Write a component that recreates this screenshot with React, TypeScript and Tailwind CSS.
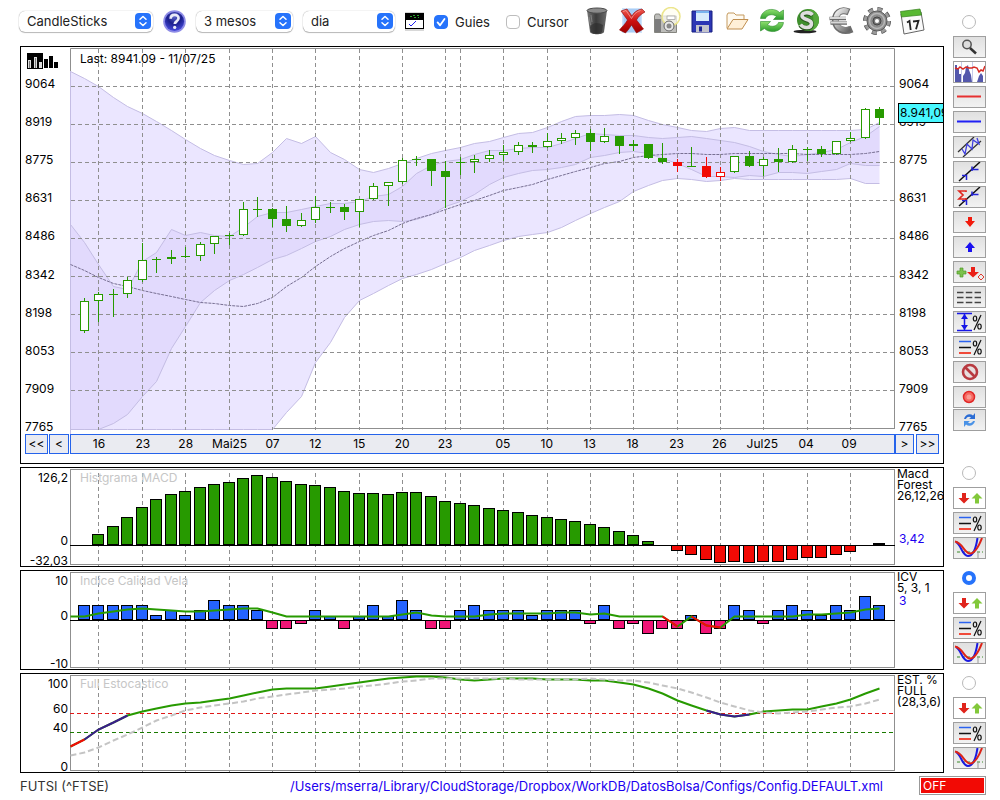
import React from 'react';

const GREEN = '#279a00';
const RED = '#f20a05';
const BLUE = '#2563ff';
const PINK = '#f01577';
const GRID = '#8f8f8f';

const px = (n: number) => (n < 0 ? 70 : Math.round(84 + 14.455 * n));

// kind: w = hollow, f = filled, l = single line; [kind, bodyTop, bodyBottom, high, low, red?]
type Candle = [string, number, number, number, number, boolean?];
const candles: Candle[] = [
  ['w', 301, 330, 298, 332], ['w', 294, 300, 292, 321], ['l', 294, 294, 289, 316], ['w', 280, 293, 277, 297],
  ['w', 260, 279, 243, 281], ['l', 259, 259, 257, 272], ['f', 257, 258, 250, 263], ['l', 256, 256, 247, 257],
  ['w', 244, 255, 242, 260], ['w', 236, 243, 236, 253], ['l', 235, 235, 233, 244], ['w', 209, 234, 202, 235],
  ['l', 209, 209, 197, 216], ['f', 209, 218, 208, 226], ['f', 219, 225, 206, 231], ['w', 220, 225, 213, 226],
  ['w', 207, 219, 196, 222], ['l', 207, 207, 202, 212], ['f', 207, 211, 204, 219], ['w', 199, 211, 199, 226],
  ['w', 186, 198, 183, 199], ['w', 182, 185, 182, 205], ['w', 160, 181, 158, 183], ['l', 159, 159, 156, 165],
  ['f', 159, 170, 159, 185], ['f', 171, 176, 161, 207], ['l', 162, 162, 157, 174], ['w', 159, 161, 155, 172],
  ['w', 155, 158, 150, 161], ['w', 152, 154, 145, 160], ['w', 145, 151, 142, 154], ['f', 145, 146, 142, 152],
  ['w', 141, 146, 133, 147], ['w', 138, 140, 133, 143], ['w', 133, 137, 130, 144], ['f', 133, 141, 129, 150],
  ['w', 136, 141, 128, 142], ['f', 136, 145, 136, 153], ['f', 144, 145, 140, 150], ['f', 144, 157, 144, 158],
  ['f', 158, 161, 143, 163], ['f', 162, 165, 159, 171, true], ['l', 166, 166, 147, 166], ['f', 166, 176, 157, 177, true],
  ['w', 172, 176, 167, 180, true], ['w', 156, 171, 156, 172], ['f', 156, 165, 151, 166], ['w', 159, 165, 157, 175],
  ['f', 159, 161, 148, 171], ['w', 149, 161, 145, 162], ['l', 149, 149, 147, 160], ['f', 149, 153, 146, 156],
  ['w', 141, 153, 141, 154], ['w', 138, 140, 132, 141], ['w', 109, 137, 108, 138], ['f', 109, 117, 107, 124],
];

// Each series starts one slot before the first candle.
const outerTop = [71, 78, 86, 97, 106, 113, 121, 130, 139, 148, 155, 160, 164, 163, 152, 138, 143, 136, 152, 159, 169, 172, 168, 163, 158, 153, 150, 147, 143, 141, 137, 133, 132, 127, 121, 116, 115, 115, 114, 115, 120, 124, 127, 130, 131, 128, 127, 130, 130, 130, 130, 130, 130, 130, 130, 129, 122];
const outerBottom = [429, 429, 429, 429, 429, 429, 429, 429, 429, 429, 429, 429, 429, 429, 429, 412, 396, 362, 342, 317, 300, 293, 285, 278, 274, 269, 263, 257, 250, 245, 240, 236, 234, 232, 227, 220, 213, 207, 201, 191, 185, 180, 178, 179, 181, 180, 178, 179, 179, 179, 179, 179, 179, 179, 178, 183, 183];
const innerTop = [224, 242, 264, 286, 289, 261, 252, 229, 235, 232, 235, 236, 227, 216, 212, 212, 209, 206, 203, 203, 201, 196, 194, 186, 173, 165, 161, 159, 154, 150, 150, 148, 147, 147, 143, 138, 133, 134, 135, 135, 137, 138, 137, 136, 138, 140, 142, 146, 151, 154, 156, 154, 152, 149, 142, 136, 126];
const innerBottom = [429, 429, 429, 423, 414, 396, 381, 348, 326, 302, 290, 280, 274, 267, 259, 255, 248, 241, 236, 229, 224, 221, 220, 221, 219, 214, 206, 201, 194, 184, 177, 173, 170, 169, 167, 164, 157, 155, 152, 151, 153, 158, 163, 169, 176, 176, 177, 175, 176, 172, 172, 173, 171, 169, 163, 165, 165];
const middle = [264, 270, 277, 283, 286, 290, 293, 296, 299, 302, 303, 305, 306, 303, 297, 286, 277, 266, 256, 248, 241, 235, 230, 223, 218, 214, 209, 204, 200, 195, 190, 187, 184, 179, 175, 171, 167, 163, 161, 157, 155, 154, 153, 153, 154, 154, 153, 153, 153, 153, 153, 154, 154, 154, 154, 153, 151];

const macd = [0, 11, 19, 28, 38, 46, 51, 54, 58, 61, 63, 67, 70, 68, 64, 61, 60, 58, 54, 52, 52, 51, 53, 53, 49, 44, 42, 40, 37, 35, 33, 30, 28, 26, 24, 21, 18, 14, 10, 4, 0, -5, -9, -14, -17, -16, -17, -16, -16, -14, -12, -12, -9, -6, 0, 2];
const icv = [15, 15, 15, 15, 15, 5, 10, 5, 10, 20, 15, 15, 10, -8, -8, -3, 10, 4, -8, 4, 15, 4, 20, 10, -8, -8, 10, 15, 10, 10, 10, 5, 10, 10, 10, -3, 15, -8, -3, -13, -8, -8, 5, -13, -8, 15, 10, -3, 10, 15, 10, 5, 15, 10, 24, 15];
const icvLine = [616, 616, 613, 611, 609, 608, 609, 610, 611, 611, 610, 609, 608, 608, 612, 616, 616, 616, 616, 616, 616, 616, 616, 614, 612, 615, 616, 616, 616, 614, 613, 613, 613, 613, 612, 612, 614, 613, 616, 616, 616, 616, 626, 616, 625, 627, 616, 616, 616, 616, 616, 614, 614, 613, 612, 609, 608];
const stoch = [746, 739, 729, 722, 715, 711, 708, 705, 703, 702, 700, 698, 695, 692, 689, 688, 688, 688, 686, 684, 682, 680, 678, 677, 676, 676, 677, 679, 680, 679, 678, 678, 678, 679, 679, 679, 680, 680, 682, 684, 688, 693, 700, 705, 710, 714, 716, 714, 711, 710, 709, 709, 706, 703, 699, 693, 688];
const signal = [755, 752, 747, 740, 734, 727, 720, 715, 710, 707, 705, 703, 701, 698, 696, 694, 692, 690, 689, 688, 686, 685, 683, 681, 680, 678, 678, 678, 678, 678, 678, 679, 679, 679, 679, 679, 678, 679, 680, 680, 682, 685, 688, 692, 697, 702, 706, 710, 712, 713, 712, 711, 709, 707, 706, 703, 699];

const ticks: [number, string][] = [
  [1, '16'], [4, '23'], [7, '28'], [10, 'Mai25'], [13, '07'], [16, '12'], [19, '15'], [22, '20'], [25, '23'], [26, ''],
  [29, '05'], [32, '10'], [35, '13'], [38, '18'], [41, '23'], [44, '26'], [47, 'Jul25'], [50, '04'], [53, '09'],
];
const prices = ['9064', '8919', '8775', '8631', '8486', '8342', '8198', '8053', '7909', '7765'];

// Polyline points for the slice [from, to] of a series, in series indexes.
const pts = (s: number[], from = 0, to = s.length - 1) =>
  s.slice(from, to + 1).map((y, i) => `${px(from + i - 1) + 0.5},${y + 0.5}`).join(' ');
const area = (a: number[], b: number[]) => `${pts(a)} ${pts(b).split(' ').reverse().join(' ')}`;

function GridColumns({ top, bottom }: { top: number; bottom: number }) {
  return (
    <g stroke={GRID} strokeDasharray="4 3">
      {ticks.map(([n]) => (
        <line key={n} x1={px(n) + 0.5} x2={px(n) + 0.5} y1={top} y2={bottom} />
      ))}
    </g>
  );
}

function Bars({ values, zero, up, down }: { values: number[]; zero: number; up: string; down: string }) {
  return (
    <g stroke="#000" shapeRendering="crispEdges">
      {values.map((v, n) =>
        v === 0 ? null : (
          <rect key={n} x={px(n) - 5.5} y={v > 0 ? zero - v + 0.5 : zero + 0.5} width={11} height={v > 0 ? v - 1 : -v} fill={v > 0 ? up : down} />
        ),
      )}
      <line x1={70} x2={895} y1={zero + 0.5} y2={zero + 0.5} />
    </g>
  );
}

function Plot({ box, className, children, label }: { box: string; className: string; label: string; children: React.ReactNode }) {
  return (
    <svg role="img" aria-label={label} viewBox={box} preserveAspectRatio="none" className={`block w-full ${className}`} fill="none">
      {children}
    </svg>
  );
}

function PriceChart() {
  return (
    <Plot box="70 47 825 387" className="h-[387px]" label="FUTSI">
      <path d="M70.5 429V48.5H894.5V429" stroke={GRID} />
      <path d="M272 428.5H894" stroke={GRID} />
      <polygon points={area(outerTop, outerBottom)} fill="#ebe6ff" />
      <polygon points={area(innerTop, innerBottom)} fill="#e2dafd" />
      <g stroke="#c4bde4">
        <polyline points={pts(outerTop)} />
        <polyline points={pts(outerBottom)} />
        <polyline points={pts(innerTop)} />
        <polyline points={pts(innerBottom)} />
        <path d="M70.5 71V434" />
      </g>
      <polyline points={pts(middle)} stroke="#776f92" strokeDasharray="3 1" />
      <GridColumns top={49} bottom={430} />
      <g stroke={GRID} strokeDasharray="4 3">
        {prices.slice(0, 9).map((p, i) => (
          <line key={p} x1={71} x2={895} y1={86.5 + i * 38} y2={86.5 + i * 38} />
        ))}
      </g>
      <g shapeRendering="crispEdges">
        {candles.map(([kind, top, bottom, high, low, red], n) => {
          const c = red ? RED : GREEN;
          const x = px(n);
          return (
            <g key={n}>
              <rect x={x} y={high} width={1} height={low - high + 1} fill={c} />
              {kind === 'w' ? (
                <rect x={x - 3.5} y={top + 0.5} width={8} height={bottom - top} fill="#fff" stroke={c} />
              ) : (
                <rect x={x - 4} y={top} width={9} height={bottom - top + 1} fill={c} />
              )}
            </g>
          );
        })}
      </g>
    </Plot>
  );
}

function Panel({ title, left, right, children }: { title: string; left: React.ReactNode; right: React.ReactNode; children: React.ReactNode }) {
  return (
    <section className="flex overflow-hidden border border-black text-[12px] leading-[12px]">
      <div className="flex h-[98px] w-[49px] shrink-0 flex-col items-end pr-[2px] pt-1">{left}</div>
      <div className="relative min-w-0 flex-1">
        <h2 className="absolute top-1 left-[10px] text-[#c6c6c6]">{title}</h2>
        {children}
      </div>
      <div className="w-[48px] shrink-0 whitespace-nowrap pl-[2px] leading-[11px]">{right}</div>
    </section>
  );
}

function Select({ label, value, className }: { label: string; value: string; className: string }) {
  return (
    <div className={`relative ${className}`}>
      <select aria-label={label} defaultValue={value} className="h-[21px] w-full appearance-none rounded-[6px] bg-white pl-2 text-[13px] leading-[20px] text-[#222] shadow-[0_0_1px_rgba(0,0,0,0.45),0_1px_1px_rgba(0,0,0,0.25)]">
        <option>{value}</option>
      </select>
      <svg viewBox="0 0 16 16" className="pointer-events-none absolute top-[2px] right-[2px] size-4" fill="none">
        <rect width="16" height="16" rx="4" fill="#2673fb" />
        <path d="M5 6.3L8 3.5l3 2.8M5 9.7l3 2.8 3-2.8" stroke="#fff" strokeWidth="1.5" strokeLinecap="round" strokeLinejoin="round" />
      </svg>
    </div>
  );
}

function Check({ id, label, checked }: { id: string; label: string; checked?: boolean }) {
  return (
    <div className="flex items-center gap-[7px] pt-[2px]">
      <span className="relative flex">
        <input id={id} type="checkbox" defaultChecked={checked} className="size-[14px] appearance-none rounded-[4px] border border-[#bdbdbd] bg-white checked:border-[#2673fb] checked:bg-[#2673fb]" />
        {checked && (
          <svg viewBox="0 0 14 14" className="pointer-events-none absolute inset-0 size-[14px]" fill="none">
            <path d="M3.6 7.4l2.5 2.9 4.4-6.4" stroke="#fff" strokeWidth="1.8" strokeLinecap="round" strokeLinejoin="round" />
          </svg>
        )}
      </span>
      <label htmlFor={id} className="text-[13px] leading-[16px] text-[#222]">{label}</label>
    </div>
  );
}

function IconButton({ label, children }: { label: string; children: React.ReactNode }) {
  return (
    <button type="button" aria-label={label} className="flex size-7 items-center justify-center">
      <svg viewBox="0 0 28 28" className="size-7" fill="none">{children}</svg>
    </button>
  );
}

function Defs() {
  return (
    <defs>
      <linearGradient id="bin" x1="0" x2="1"><stop stopColor="#777" /><stop offset=".45" stopColor="#3c3c3c" /><stop offset="1" stopColor="#6d6d6d" /></linearGradient>
      <linearGradient id="red" x1="0" x2="0" y1="0" y2="1"><stop stopColor="#ee5a50" /><stop offset=".5" stopColor="#cc1010" /><stop offset="1" stopColor="#9c0000" /></linearGradient>
      <linearGradient id="steel" x1="0" x2="1" y1="0" y2="1"><stop stopColor="#f2f2f2" /><stop offset=".5" stopColor="#aaa" /><stop offset="1" stopColor="#666" /></linearGradient>
      <linearGradient id="leaf" x1="0" x2="0" y1="0" y2="1"><stop stopColor="#8ee06e" /><stop offset="1" stopColor="#2a9a2a" /></linearGradient>
    </defs>
  );
}

function Toolbar() {
  return (
    <header className="flex h-[46px] items-center gap-[10px] pb-1">
      <Select label="Tipus" value="CandleSticks" className="-ml-px w-[134px]" />
      <button type="button" aria-label="Ajuda" className="size-[23px] shrink-0">
        <svg viewBox="0 0 24 24" className="size-[23px]">
          <radialGradient id="help" cx=".5" cy=".25" r=".8"><stop stopColor="#5a62c8" /><stop offset=".45" stopColor="#1b1f8c" /><stop offset="1" stopColor="#4c50e8" /></radialGradient>
          <circle cx="12" cy="12" r="11.8" fill="#8d8be6" />
          <circle cx="12" cy="12" r="10" fill="url(#help)" />
          <path d="M8 9.2c0-5.4 8.4-5.2 8.2-.6-.1 3.2-3.9 3.2-3.9 6" fill="none" stroke="#e9eaf8" strokeWidth="2.8" />
          <circle cx="12.2" cy="18.2" r="1.7" fill="#e9eaf8" />
        </svg>
      </button>
      <Select label="Període" value="3 mesos" className="w-[97px]" />
      <Select label="Interval" value="dia" className="w-[92px]" />
      <button type="button" aria-label="Finestra" className="shrink-0">
        <svg viewBox="0 0 19 19" className="size-[19px]" shapeRendering="crispEdges" fill="none">
          <rect width="19" height="19" fill="#d8d8d8" />
          <rect y="1" width="19" height="6" fill="#000" />
          <path d="M5 4h2M8 3h2M9 5h2M12 3h2M13 5h1" stroke="#2aa02a" />
          <rect x=".5" y="7.5" width="18" height="9" fill="#fff" stroke="#000" />
          <path d="M4 12l2 2 5-5" stroke="#2020f0" shapeRendering="auto" />
        </svg>
      </button>
      <div className="flex gap-4">
        <Check id="guies" label="Guies" checked />
        <Check id="cursor" label="Cursor" />
      </div>
      <div className="ml-1 flex gap-[7px]">
        <IconButton label="Paperera">
          <Defs />
          <path d="M4 3.5L7 25c1 3 13 3 14 0l3-21.500z" fill="url(#bin)" />
          <path d="M7 20c3-5 8-5 13-2l-1 7c-3 2-8 2-11 0z" fill="#2b2b2b" opacity=".6" />
          <ellipse cx="14" cy="3.600" rx="10" ry="2.600" fill="#8a8a8a" stroke="#4c4c4c" />
          <path d="M6 10l1.500 8M8 8l1 7" stroke="#999" opacity=".6" />
        </IconButton>
        <IconButton label="Eliminar">
          <rect x="4" y="1" width="20" height="25" fill="#cfe4fb" />
          <rect x="5.500" y="2" width="17" height="23" fill="#a9cdf5" />
          <path d="M3 4l6-2 5 7c2-4 5-6 10-7l3 3c-4 2-7 5-8.500 8l7 9-7 4-5-8c-2 3-4 6-6 8l-6-3c2-3 6-6 8-10z" fill="url(#red)" stroke="#8f0808" strokeWidth=".6" />
          <path d="M5 4.500l3-1 5.500 8c2-4 5-7 9-8" stroke="#f4a29c" strokeWidth=".8" />
        </IconButton>
        <IconButton label="Captura">
          <path d="M1.500 9l1-2h4l1 2h16v16.500h-22z" fill="#bdbdba" stroke="#85857f" />
          <path d="M2 12h6v13H2z" fill="#7d7d7d" />
          <circle cx="18" cy="9.500" r="9" fill="#fffef0" fillOpacity=".75" stroke="#ece58c" strokeWidth="1.500" />
          <circle cx="16" cy="19" r="5" fill="#e8e8e8" stroke="#666" />
          <circle cx="16" cy="19" r="2.500" fill="#888" />
          <rect x="14" y="9" width="8" height="3.500" fill="#fff" stroke="#999" strokeWidth=".7" />
        </IconButton>
        <IconButton label="Desar">
          <path d="M4 4h20v21H4z" fill="#2c36b4" stroke="#161f80" />
          <path d="M8 4h13v10H8z" fill="#d8ebfb" />
          <path d="M8 4h13v2H8z" fill="#79b4ee" />
          <path d="M8 18h13v7H8z" fill="#c4c4cc" />
          <path d="M11 19.500h3v5h-3z" fill="#1e2794" />
        </IconButton>
        <IconButton label="Obrir">
          <path d="M4 21V8l1-2h6l2 2h8v4" fill="#fffaf0" stroke="#c59a5e" />
          <path d="M4 22l6-9.500h15L19 22z" fill="#fff0d8" stroke="#c08f50" />
        </IconButton>
        <IconButton label="Refrescar">
          <path d="M2.500 11.500C4 1 17 .5 21.500 5.500L25.500 3v9.500H15.500l3-3.200C14.500 6.500 9 7.500 7.500 11.500z" fill="url(#leaf)" stroke="#2c8c2c" strokeWidth=".6" />
          <path d="M25.500 15.500C24 26 11 26.500 6.500 21.500L2.500 24v-9.500h10l-3 3.200c4 2.800 9.500 1.800 11-2.200z" fill="url(#leaf)" stroke="#2c8c2c" strokeWidth=".6" />
        </IconButton>
        <IconButton label="Dòlar">
          <ellipse cx="12" cy="24.500" rx="11.500" ry="1.700" fill="#222" />
          <circle cx="15" cy="13" r="11" fill="#3f8f2d" />
          <path d="M15 2a11 11 0 0 1 11 11c0 6-4 10-9 11l1-4c4-5 3-14-3-18z" fill="#56a83c" />
          <path d="M19.500 8.500C17 5 8.500 5.500 9 9.500c.6 4.500 10 2.500 9.500 8-.4 4.500-8 4.500-11 .5" stroke="#2a5a20" strokeWidth="5" />
          <path d="M19.500 8C17 4.500 8.500 5 9 9c.6 4.500 10 2.500 9.500 8-.4 4.500-8 4.500-11 .5" stroke="#dedede" strokeWidth="3.600" />
        </IconButton>
        <IconButton label="Euro">
          <path d="M21 5C12 1 7 7 7.500 14 8 21.500 15 26 24 22" stroke="#6d6d6d" strokeWidth="7" />
          <path d="M20 4.500C12 1.500 7.500 7 8 14c.5 7 7 10.500 14 7.500" stroke="url(#steel)" strokeWidth="5" />
          <path d="M1.500 11.500H18M2.500 16H19" stroke="#6a6a6a" strokeWidth="3.500" />
          <path d="M2 11H18M3 15.500H19" stroke="#d8d8d8" strokeWidth="2" />
        </IconButton>
        <IconButton label="Configuració">
          <circle cx="14" cy="14" r="11.700" stroke="#555" strokeWidth="4.600" strokeDasharray="4.900 4.300" />
          <circle cx="14" cy="14" r="11.600" stroke="#9b9b9b" strokeWidth="3.200" strokeDasharray="4.400 4.740" />
          <circle cx="14" cy="14" r="10" fill="#8d8d8d" stroke="#5a5a5a" />
          <circle cx="14" cy="14" r="7.500" stroke="#b8b8b8" strokeWidth="1.500" />
          <circle cx="14" cy="14" r="4" fill="#777" stroke="#444" />
          <circle cx="14" cy="14" r="2" fill="#fff" />
        </IconButton>
        <IconButton label="Calendari">
          <path d="M3 7l20-2 3 18-20 4z" fill="#fafafa" stroke="#666" />
          <path d="M2.500 4.500L22 2l1.500 6L3.500 10z" fill="#58b832" stroke="#35811c" strokeWidth=".7" />
          <path d="M9 15.500l2.500-1.500 1.200 9M15 14.500l5.500-.7-2.500 8.500" stroke="#222" strokeWidth="1.800" />
        </IconButton>
      </div>
    </header>
  );
}

function Tool({ label, white, children }: { label: string; white?: boolean; children: React.ReactNode }) {
  return (
    <button type="button" aria-label={label} className={`block h-[22px] w-[33px] border border-[#9f9f9f] ${white ? 'bg-white' : 'bg-linear-to-b from-[#e0e0e0] to-[#f2f2f2]'}`}>
      <svg viewBox="0 0 31 20" className="h-5 w-[31px]" fill="none">{children}</svg>
    </button>
  );
}

function Percent() {
  return (
    <g stroke="#111" strokeWidth="1.200">
      <path d="M27 3L20 18" />
      <ellipse cx="21" cy="6.500" rx="1.700" ry="2.500" />
      <ellipse cx="25.500" cy="14.500" rx="1.700" ry="2.500" />
    </g>
  );
}

function Levels() {
  return (
    <Tool label="Nivells">
      <path d="M5 4.500h12" stroke="#2a62f0" strokeWidth="1.500" />
      <path d="M5 10.500h12" stroke="#111" strokeWidth="1.500" />
      <path d="M5 16h12" stroke="#f04a3a" strokeWidth="2" />
      <Percent />
    </Tool>
  );
}

function Radio({ label, checked }: { label: string; checked?: boolean }) {
  return (
    <input type="radio" name="panel" aria-label={label} defaultChecked={checked} className="mr-[2px] block size-[14px] shrink-0 appearance-none rounded-full border border-[#b9b9b9] bg-white checked:border-[4px] checked:border-[#2673fb]" />
  );
}

function IndicatorTools({ label, checked }: { label: string; checked?: boolean }) {
  return (
    <div className="flex flex-col items-center gap-[7px]">
      <Radio label={label} checked={checked} />
      <div className="flex flex-col gap-[3px]">
        <Tool label="Senyals" white>
          <path d="M8 5h4v5h3.500L10 15.500 4.500 10H8z" fill="#e0241c" />
          <path d="M21 15.500h4v-5h3.500L23 5l-5.500 5.500H21z" fill="#82c83a" />
        </Tool>
        <Levels />
        <Tool label="Encreuaments">
          <path d="M3 14h26" stroke="#3a8a2a" strokeDasharray="3 2" />
          <path d="M24 14v6" stroke="#999" />
          <path d="M2 4c5 2 6 14 12 14 5 0 8-8 9.500-18" stroke="#1a1ae0" strokeWidth="2" />
          <path d="M1 3.500C9 5 10 15 16 15.500 21 15.500 25 8 28 0" stroke="#dd2418" strokeWidth="2" />
        </Tool>
      </div>
    </div>
  );
}

function Trend() {
  return (
    <>
      <path d="M5 19L26 0" stroke="#111" strokeWidth="1.500" />
      <path d="M8 13.500h4.500v4.500M18 9V4.500M18 7.500h6.500" stroke="#2222d8" strokeWidth="1.500" />
    </>
  );
}

function SideTools() {
  return (
    <aside className="flex w-[33px] shrink-0 flex-col items-center pt-[15px]">
      <Radio label="Preu" />
      <div className="mt-[7px] flex flex-col gap-[3px]">
        <Tool label="Zoom"><circle cx="13" cy="7.500" r="4.200" fill="#ddd" stroke="#555" strokeWidth="1.500" /><path d="M16 11l6 5.500" stroke="#333" strokeWidth="2.500" /></Tool>
        <Tool label="Volum" white>
          <path d="M1 20V3h2v4h2v5h2v8zM9 20V14l2-3 1-6 2-2 1 5 2 5 1 7zM23 20l2-6 2-3 2 3v6z" fill="#5458ac" />
          <path d="M7.500 0v20M18.500 0v20" stroke="#c7cbe8" />
          <path d="M1 6l3 1 2-2 3 2 3-2 3 1 3 0 2-1 3 1 2 4 2-2 2 1 2-5" stroke="#d92a22" strokeWidth="1.500" />
        </Tool>
        <Tool label="Línia vermella"><path d="M3 9.500h24" stroke="#e63030" strokeWidth="2" /></Tool>
        <Tool label="Línia blava"><path d="M3 9.500h24" stroke="#2020f4" strokeWidth="2" /></Tool>
        <Tool label="Canal"><path d="M4 15L20 0M9 20L27 4" stroke="#333" strokeWidth="1.300" /><path d="M8 12l3 5 2-10 5 5 1-9 6 4-2-6" stroke="#4040e0" strokeWidth="1.300" /></Tool>
        <Tool label="Tendència"><Trend /></Tool>
        <Tool label="Regressió"><Trend /><path d="M12 5V4H5l4 4-4 4h7v-1" stroke="#e02820" strokeWidth="1.700" /></Tool>
        <Tool label="Baixa"><path d="M14 5h4v4h3l-5 6-5-6h3z" fill="#f21a0c" /></Tool>
        <Tool label="Puja"><path d="M14 15h4v-4h3l-5-6-5 6h3z" fill="#1a10f0" /></Tool>
        <Tool label="Afegir">
          <path d="M6 6h3v3h3v3H9v3H6v-3H3V9h3z" fill="#7cc24c" stroke="#4f9a2a" strokeWidth=".7" />
          <path d="M17 5h4v5h4l-6 5.500L13 10h4z" fill="#ea2018" />
          <path d="M27 12l3 3-3 3-3-3z" stroke="#e03a30" />
        </Tool>
        <Tool label="Línies"><path d="M3 5.500h24M3 10.500h24M3 15.500h24" stroke="#444" strokeWidth="1.700" strokeDasharray="6.500 2.300" /></Tool>
        <Tool label="Rang">
          <path d="M3 1.500h15M3 18.500h15M10.500 2v16" stroke="#1616e6" strokeWidth="1.500" />
          <path d="M7 7l3.500-5L14 7zM7 13l3.500 5 3.500-5z" fill="#1616e6" />
          <Percent />
        </Tool>
        <Levels />
        <Tool label="Prohibir"><circle cx="16" cy="10" r="7" fill="#e8dede" stroke="#b83a40" strokeWidth="2.600" /><path d="M11 5l10 10" stroke="#b83a40" strokeWidth="2.600" /></Tool>
        <div className="flex flex-col gap-px">
          <Tool label="Gravar"><circle cx="15" cy="10" r="5.500" fill="#f56a62" stroke="#e02828" strokeWidth="1.500" /><circle cx="15" cy="10" r="2.500" fill="#fb9a92" /></Tool>
          <Tool label="Sincronitzar">
            <path d="M10 9c1-4.500 6-6 9-3.500L21 3v6h-6l2-1.500c-2-1.500-4-.5-5 1.500z" fill="#2b6cd4" />
            <path d="M21 11c-1 4.500-6 6-9 3.500L10 17v-6h6l-2 1.500c2 1.500 4 .5 5-1.500z" fill="#4a92e6" />
          </Tool>
        </div>
      </div>
      <div className="mt-[35px] flex flex-col gap-3">
        <IndicatorTools label="MACD" />
        <IndicatorTools label="ICV" checked />
        <IndicatorTools label="Estocàstic" />
      </div>
    </aside>
  );
}

const navButton = 'flex items-center justify-center border border-[#2563eb] bg-[#eaebf1]';

export default function App() {
  return (
    <div className="flex min-h-screen bg-white pr-[14px] pl-5 font-['Inter',sans-serif] text-[12px] text-black">
      <div className="flex min-w-0 flex-1 flex-col">
        <Toolbar />
        <main className="mr-[9px] flex flex-col gap-[3px]">
          <section className="overflow-hidden border border-black pb-[9px] leading-[14px]">
            <div className="flex">
              <div className="flex w-[49px] shrink-0 flex-col pt-[6px] pl-1">
                <svg viewBox="0 0 32 16" className="ml-[2px] h-4 w-8" shapeRendering="crispEdges">
                  <rect width="16" height="16" fill="#000" />
                  <path d="M1 7h3v8H1zM7 4h3v11H7zM12 9h3v6h-3z" fill="#ddd" />
                  <path d="M2 8h1v7H2zM8 5h1v10H8z" fill="#777" />
                  <path d="M17 6h4v9h-4zM22 3h4v12h-4zM27 9h4v6h-4z" fill="#000" />
                </svg>
                <div className="mt-2 flex flex-1 flex-col justify-between">
                  {prices.map((p) => <span key={p}>{p}</span>)}
                </div>
              </div>
              <div className="relative min-w-0 flex-1">
                <h1 className="absolute top-[5px] left-[10px]">Last: 8941.09 - 11/07/25</h1>
                <PriceChart />
              </div>
              <div className="relative flex w-[48px] shrink-0 flex-col justify-between pt-[30px] pl-1">
                {prices.map((p) => <span key={p}>{p}</span>)}
                <output className="absolute top-[56px] left-[3px] border border-black bg-[#47f7ff] py-[2px] pl-px">8.941,09</output>
              </div>
            </div>
            <nav className="flex h-5">
              <div className="flex w-[49px] shrink-0 gap-px pl-1">
                <button type="button" className={`w-[23px] ${navButton}`}>&lt;&lt;</button>
                <button type="button" className={`w-5 ${navButton}`}>&lt;</button>
              </div>
              <div className="relative min-w-0 flex-1 border border-[#2563eb] bg-[#eaebf1]">
                {ticks.map(([n, text]) => (
                  <span key={n} className="absolute top-[2px] -translate-x-1/2" style={{ left: `${((px(n) - 70) / 825) * 100}%` }}>{text}</span>
                ))}
              </div>
              <div className="flex w-[48px] shrink-0 gap-[2px]">
                <button type="button" className={`w-[19px] ${navButton}`}>&gt;</button>
                <button type="button" className={`w-[23px] ${navButton}`}>&gt;&gt;</button>
              </div>
            </nav>
          </section>

          <Panel
            title="Histgrama MACD"
            left={<><span>126,2</span><span className="mt-[51px]">0</span><span className="mt-2">-32,03</span></>}
            right={<><p>Macd</p><p>Forest</p><p>26,12,26</p><p className="mt-8 pl-[2px] text-[#1c00f0]">3,42</p></>}
          >
            <Plot box="70 468 825 98" className="h-[98px]" label="Histograma MACD">
              <rect x="70.500" y="469.500" width="824" height="95" stroke={GRID} />
              <GridColumns top={473} bottom={566} />
              <Bars values={macd} zero={545} up={GREEN} down={RED} />
            </Plot>
          </Panel>

          <Panel
            title="Indice Calidad Vela"
            left={<><span>10</span><span className="mt-[23px]">0</span><span className="mt-9">-10</span></>}
            right={<><p>ICV</p><p>5, 3, 1</p><p className="mt-[2px] pl-[2px] text-[#1c00f0]">3</p></>}
          >
            <Plot box="70 571 825 98" className="h-[98px]" label="Indice Calidad Vela">
              <rect x="70.500" y="572.500" width="824" height="95" stroke={GRID} />
              <GridColumns top={576} bottom={669} />
              <Bars values={icv} zero={620} up={BLUE} down={PINK} />
              <g strokeWidth="2" stroke={GREEN}>
                <polyline points={pts(icvLine)} />
                <polyline points={pts(icvLine, 41, 42)} stroke={RED} />
                <polyline points={pts(icvLine, 43, 45)} stroke={RED} />
              </g>
            </Plot>
          </Panel>

          <Panel
            title="Full Estocastico"
            left={<><span>100</span><span className="mt-[13px]">60</span><span className="mt-[7px]">40</span><span className="mt-[27px]">0</span></>}
            right={<><p>EST. %</p><p>FULL</p><p>(28,3,6)</p></>}
          >
            <Plot box="70 674 825 98" className="h-[98px]" label="Full Estocastico">
              <rect x="70.500" y="675.500" width="824" height="95" stroke={GRID} />
              <GridColumns top={679} bottom={772} />
              <path d="M70 713.500H895" stroke="#e01818" strokeDasharray="4 3" />
              <path d="M70 732.500H895" stroke="#1a7a00" strokeDasharray="4 3" />
              <g strokeWidth="2">
                <polyline points={pts(stoch)} stroke={GREEN} />
                <polyline points={pts(stoch, 0, 1)} stroke={RED} />
                <polyline points={pts(stoch, 1, 4)} stroke="#3a1c8c" />
                <polyline points={pts(stoch, 44, 47)} stroke="#3a1c8c" />
                <polyline points={pts(signal)} stroke="#c4c4c4" strokeDasharray="6 3" />
              </g>
            </Plot>
          </Panel>
        </main>
        <footer className="flex h-[25px] items-center justify-between text-[13px] leading-[16px]">
          <span className="text-[#333]">FUTSI (^FTSE)</span>
          <div className="flex items-center gap-9">
            <a href="#config" className="text-[#1c00f0]">/Users/mserra/Library/CloudStorage/Dropbox/WorkDB/DatosBolsa/Configs/Config.DEFAULT.xml</a>
            <button type="button" className="-mr-[33px] h-[19px] w-[67px] border border-[#999] bg-[#f20a05] pl-[3px] text-left text-[12px] text-white outline-1 -outline-offset-2 outline-white">OFF</button>
          </div>
        </footer>
      </div>
      <SideTools />
    </div>
  );
}
